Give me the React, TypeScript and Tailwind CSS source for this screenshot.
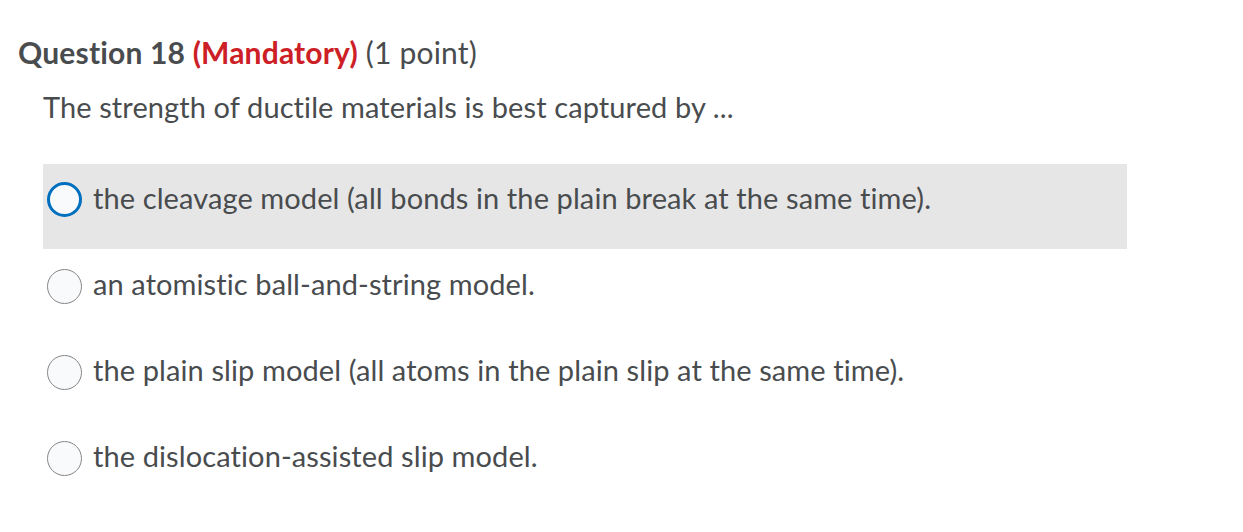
import React from "react";

const options = [
  "the cleavage model (all bonds in the plain break at the same time).",
  "an atomistic ball-and-string model.",
  "the plain slip model (all atoms in the plain slip at the same time).",
  "the dislocation-assisted slip model.",
];

export default function App() {
  return (
    <div
      className="w-[1243px] h-[532px] bg-white text-[#494c4e] overflow-hidden"
      style={{ fontFamily: "Lato, 'Noto Sans', sans-serif", fontVariantLigatures: "none" }}
    >
      <div className="pt-[31px] pl-[18px]">
        <h2 className="text-[30px] leading-[42px] h-[42px] tracking-[0.18px]">
          <span className="font-bold">Question 18 </span>
          <span className="font-bold text-[#cd2026]">(Mandatory)</span>
          <span> (1 point)</span>
        </h2>
      </div>
      <div className="pl-[43px] mt-[14px]">
        <p className="text-[29px] leading-[40px] h-[40px] tracking-[0.1px]">The strength of ductile materials is best captured by ...</p>
        <div className="mt-[37px] w-[1084px] flex flex-col">
          {options.map((o, i) => (
            <div
              key={i}
              className={`flex items-center pb-[14px] ${i === 0 ? "bg-[#e6e6e6] h-[85px] mb-[1px]" : "h-[86px]"}`}
            >
              <div className="ml-[4px] w-[35px] h-[35px] flex-none">
                {i === 0 ? (
                  <div className="w-[35px] h-[35px] rounded-full border-[3px] border-[#006fbf] bg-[#f9fafc]" />
                ) : (
                  <div className="w-[35px] h-[35px] rounded-full border border-[#868686] bg-[#f9fafc]" />
                )}
              </div>
              <span className="ml-[11px] mb-[4px] text-[29px] leading-[40px] tracking-[0.1px]">{o}</span>
            </div>
          ))}
        </div>
      </div>
    </div>
  );
}
